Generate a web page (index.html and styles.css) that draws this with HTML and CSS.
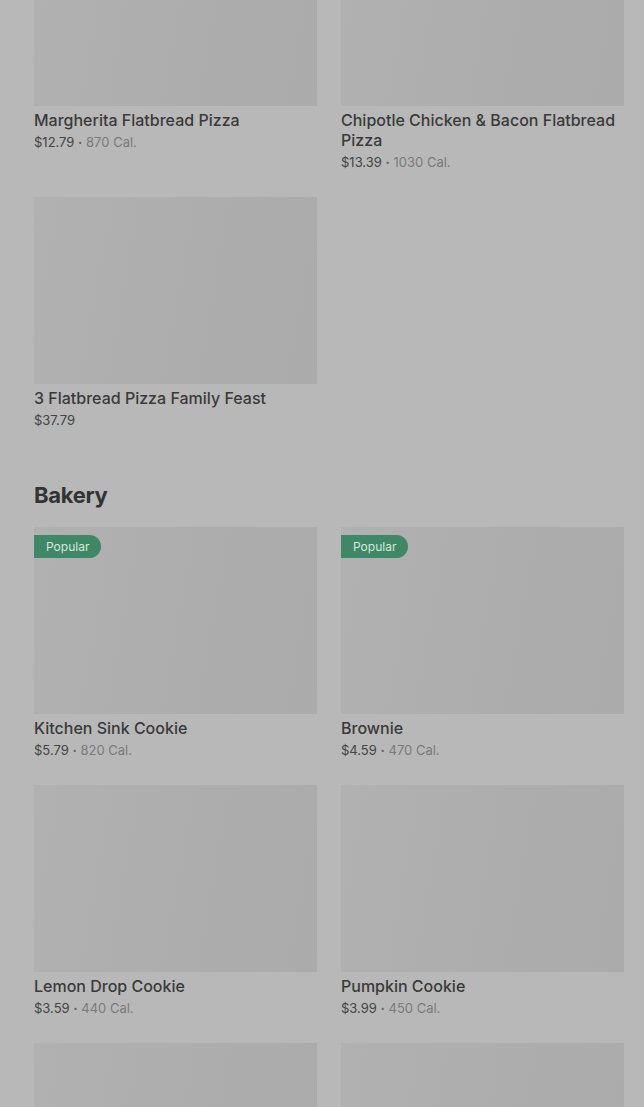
FILE: index.html
```html
<!DOCTYPE html>
<html lang="en">
<head>
  <meta charset="utf-8" />
  <meta name="viewport" content="width=device-width, initial-scale=1" />
  <title>Menu</title>
  <link rel="stylesheet" href="styles.css">
</head>
<body>
  <div class="menu">
    <section class="category">
      <div class="grid">
        <div class="item">
          <div class="photo"></div>
          <h3>Margherita Flatbread Pizza</h3>
          <p class="meta">$12.79 <span class="dot">·</span> <span class="cal">870 Cal.</span></p>
        </div>
        <div class="item">
          <div class="photo"></div>
          <h3>Chipotle Chicken &amp; Bacon Flatbread Pizza</h3>
          <p class="meta">$13.39 <span class="dot">·</span> <span class="cal">1030 Cal.</span></p>
        </div>
        <div class="item">
          <div class="photo"></div>
          <h3>3 Flatbread Pizza Family Feast</h3>
          <p class="meta">$37.79</p>
        </div>
      </div>
    </section>

    <section class="category">
      <h2>Bakery</h2>
      <div class="grid">
        <div class="item">
          <div class="photo"><span class="badge">Popular</span></div>
          <h3>Kitchen Sink Cookie</h3>
          <p class="meta">$5.79 <span class="dot">·</span> <span class="cal">820 Cal.</span></p>
        </div>
        <div class="item">
          <div class="photo"><span class="badge">Popular</span></div>
          <h3>Brownie</h3>
          <p class="meta">$4.59 <span class="dot">·</span> <span class="cal">470 Cal.</span></p>
        </div>
        <div class="item">
          <div class="photo"></div>
          <h3>Lemon Drop Cookie</h3>
          <p class="meta">$3.59 <span class="dot">·</span> <span class="cal">440 Cal.</span></p>
        </div>
        <div class="item">
          <div class="photo"></div>
          <h3>Pumpkin Cookie</h3>
          <p class="meta">$3.99 <span class="dot">·</span> <span class="cal">450 Cal.</span></p>
        </div>
        <div class="item">
          <div class="photo"></div>
        </div>
        <div class="item">
          <div class="photo"></div>
        </div>
      </div>
    </section>
  </div>
</body>
</html>
```

FILE: styles.css
```css
body {
  margin: 0;
  background-color: #b8b8b8;
  color: #3a3a3a;
  font-family: Inter, 'Noto Sans', Arial, sans-serif;
  overflow: hidden;
}

.menu {
  /* page is scrolled part way into the first category */
  margin-top: -81px;
  padding: 0 20px 0 34px;
}

.category {
  margin-bottom: 51px;
}

.category h2 {
  margin: 0 0 18px;
  font-size: 22px;
  line-height: 28px;
  font-weight: 700;
  letter-spacing: -0.3px;
  color: #333;
}

.grid {
  display: grid;
  grid-template-columns: 283px 283px;
  column-gap: 24px;
  row-gap: 25px;
}

.photo {
  position: relative;
  height: 187px;
  background: linear-gradient(100deg, #b1b1b1 0%, #adadad 55%, #ababab 100%);
}

.badge {
  position: absolute;
  top: 8px;
  left: 0;
  padding: 0 12px;
  height: 23px;
  line-height: 23px;
  font-size: 12px;
  color: #d7e8de;
  background-color: #3f8766;
  border-radius: 0 12px 12px 0;
}

.item h3 {
  margin: 4px 0 2px;
  font-size: 16px;
  line-height: 20px;
  font-weight: 500;
  color: #3a3a3a;
}

.meta {
  margin: 0;
  height: 20px;
  font-size: 13px;
  line-height: 20px;
  color: #444;
}

.dot {
  font-weight: 700;
  color: #666;
}

.cal {
  color: #7a7a7a;
}
```
